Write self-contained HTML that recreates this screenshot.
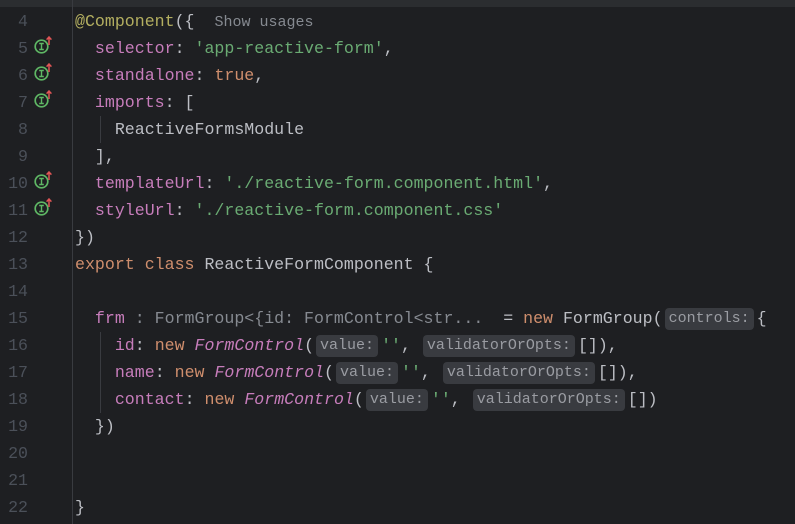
<!DOCTYPE html>
<html><head><meta charset="utf-8"><style>
html,body{margin:0;padding:0}
body{width:795px;height:524px;overflow:hidden;background:#1e1f22;position:relative;font-family:"Liberation Mono",monospace;font-size:16.6px;color:#bcbec4}
.top{position:absolute;left:0;top:0;width:795px;height:7px;background:#2b2d30}
.vl{position:absolute;left:72px;top:0;width:1px;height:524px;background:#393b40}
.ln{position:absolute;left:0;width:28px;text-align:right;color:#4b5059;height:27px;line-height:27px}
.c{position:absolute;left:75px;height:27px;line-height:27px;white-space:pre}
.k{color:#c77dbb}.s{color:#6aab73}.o{color:#cf8e6d}.d{color:#b3ae60}.g{color:#868a91}
.f{color:#c77dbb;font-style:italic}
.h{display:inline-block;font-size:15px;line-height:22px;height:22px;background:#393b40;color:#9a9ca2;border-radius:4px;padding:0 4px;margin:0 3px 0 2px;vertical-align:1px}
.su{font-size:15px;color:#868a91}
.ic{position:absolute;left:33px;width:20px;height:18px}
.guide{position:absolute;width:1px;background:#393b40}
</style></head><body>
<div class="top"></div>
<div class="vl"></div>
<div class="guide" style="left:100px;top:116px;height:27px"></div>
<div class="guide" style="left:100px;top:332px;height:81px"></div>

<div class="ln" style="top:8px">4</div>
<div class="ln" style="top:35px">5</div>
<div class="ln" style="top:62px">6</div>
<div class="ln" style="top:89px">7</div>
<div class="ln" style="top:116px">8</div>
<div class="ln" style="top:143px">9</div>
<div class="ln" style="top:170px">10</div>
<div class="ln" style="top:197px">11</div>
<div class="ln" style="top:224px">12</div>
<div class="ln" style="top:251px">13</div>
<div class="ln" style="top:278px">14</div>
<div class="ln" style="top:305px">15</div>
<div class="ln" style="top:332px">16</div>
<div class="ln" style="top:359px">17</div>
<div class="ln" style="top:386px">18</div>
<div class="ln" style="top:413px">19</div>
<div class="ln" style="top:440px">20</div>
<div class="ln" style="top:467px">21</div>
<div class="ln" style="top:494px">22</div>

<svg class="ic" style="top:36px" viewBox="0 0 20 18"><circle cx="8.5" cy="10.5" r="6.3" fill="none" stroke="#5fb865" stroke-width="1.7"/><path d="M6.2 7.5h4.6M6.2 13.5h4.6M8.5 7.5v6" stroke="#5fb865" stroke-width="1.4" fill="none"/><path d="M16 9V1M13.6 3.6L16 1l2.4 2.6" stroke="#e05555" stroke-width="1.5" fill="none"/></svg>
<svg class="ic" style="top:63px" viewBox="0 0 20 18"><circle cx="8.5" cy="10.5" r="6.3" fill="none" stroke="#5fb865" stroke-width="1.7"/><path d="M6.2 7.5h4.6M6.2 13.5h4.6M8.5 7.5v6" stroke="#5fb865" stroke-width="1.4" fill="none"/><path d="M16 9V1M13.6 3.6L16 1l2.4 2.6" stroke="#e05555" stroke-width="1.5" fill="none"/></svg>
<svg class="ic" style="top:90px" viewBox="0 0 20 18"><circle cx="8.5" cy="10.5" r="6.3" fill="none" stroke="#5fb865" stroke-width="1.7"/><path d="M6.2 7.5h4.6M6.2 13.5h4.6M8.5 7.5v6" stroke="#5fb865" stroke-width="1.4" fill="none"/><path d="M16 9V1M13.6 3.6L16 1l2.4 2.6" stroke="#e05555" stroke-width="1.5" fill="none"/></svg>
<svg class="ic" style="top:171px" viewBox="0 0 20 18"><circle cx="8.5" cy="10.5" r="6.3" fill="none" stroke="#5fb865" stroke-width="1.7"/><path d="M6.2 7.5h4.6M6.2 13.5h4.6M8.5 7.5v6" stroke="#5fb865" stroke-width="1.4" fill="none"/><path d="M16 9V1M13.6 3.6L16 1l2.4 2.6" stroke="#e05555" stroke-width="1.5" fill="none"/></svg>
<svg class="ic" style="top:198px" viewBox="0 0 20 18"><circle cx="8.5" cy="10.5" r="6.3" fill="none" stroke="#5fb865" stroke-width="1.7"/><path d="M6.2 7.5h4.6M6.2 13.5h4.6M8.5 7.5v6" stroke="#5fb865" stroke-width="1.4" fill="none"/><path d="M16 9V1M13.6 3.6L16 1l2.4 2.6" stroke="#e05555" stroke-width="1.5" fill="none"/></svg>

<div class="c" style="top:8px"><span class="d">@Component</span>({  <span class="su">Show usages</span></div>
<div class="c" style="top:35px">  <span class="k">selector</span>: <span class="s">'app-reactive-form'</span>,</div>
<div class="c" style="top:62px">  <span class="k">standalone</span>: <span class="o">true</span>,</div>
<div class="c" style="top:89px">  <span class="k">imports</span>: [</div>
<div class="c" style="top:116px">    ReactiveFormsModule</div>
<div class="c" style="top:143px">  ],</div>
<div class="c" style="top:170px">  <span class="k">templateUrl</span>: <span class="s">'./reactive-form.component.html'</span>,</div>
<div class="c" style="top:197px">  <span class="k">styleUrl</span>: <span class="s">'./reactive-form.component.css'</span></div>
<div class="c" style="top:224px">})</div>
<div class="c" style="top:251px"><span class="o">export class</span> ReactiveFormComponent {</div>
<div class="c" style="top:305px">  <span class="k">frm</span> <span class="g">: FormGroup&lt;{id: FormControl&lt;str...</span>  = <span class="o">new</span> FormGroup(<span class="h">controls:</span>{</div>
<div class="c" style="top:332px">    <span class="k">id</span>: <span class="o">new</span> <span class="f">FormControl</span>(<span class="h">value:</span><span class="s">''</span>, <span class="h">validatorOrOpts:</span>[]),</div>
<div class="c" style="top:359px">    <span class="k">name</span>: <span class="o">new</span> <span class="f">FormControl</span>(<span class="h">value:</span><span class="s">''</span>, <span class="h">validatorOrOpts:</span>[]),</div>
<div class="c" style="top:386px">    <span class="k">contact</span>: <span class="o">new</span> <span class="f">FormControl</span>(<span class="h">value:</span><span class="s">''</span>, <span class="h">validatorOrOpts:</span>[])</div>
<div class="c" style="top:413px">  })</div>
<div class="c" style="top:494px">}</div>
</body></html>
